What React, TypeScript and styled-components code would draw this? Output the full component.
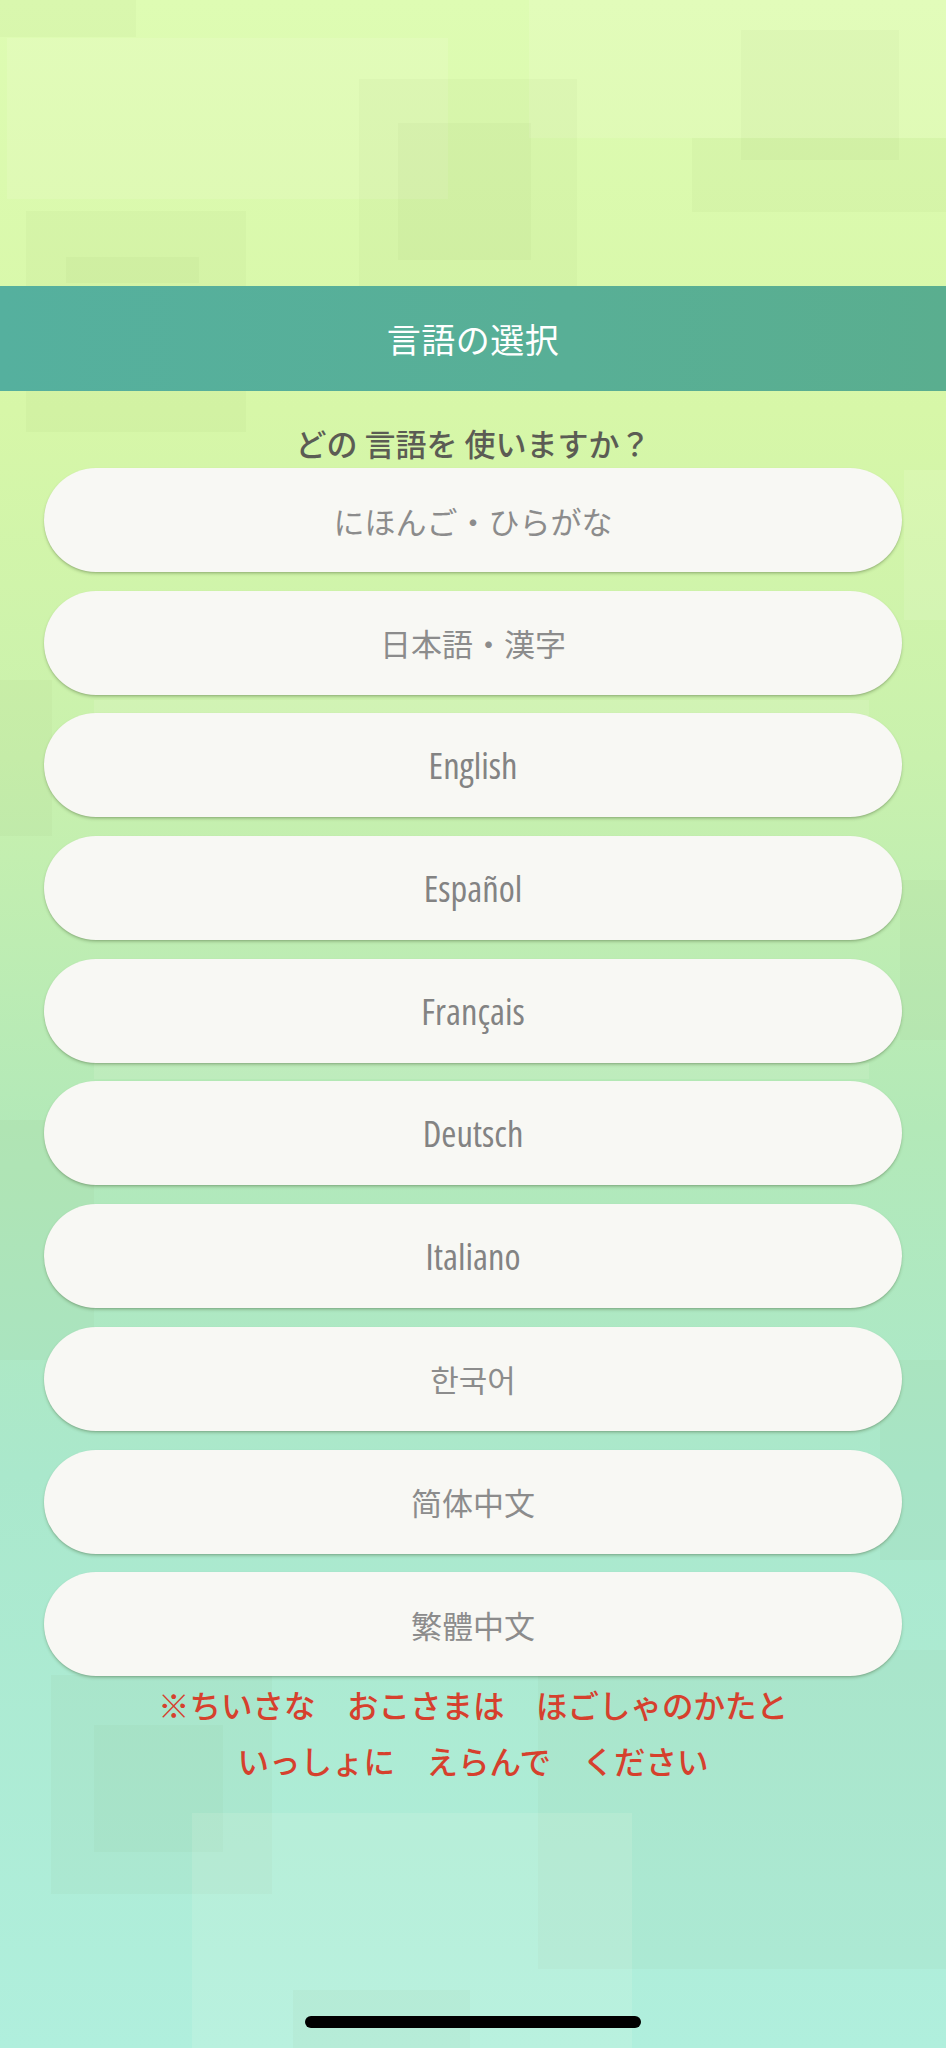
import React, { FC } from 'react';
import styled, { createGlobalStyle } from 'styled-components';

const GlobalStyle = createGlobalStyle`
  html, body {
    margin: 0;
    padding: 0;
  }

  body {
    font-family: "Noto Sans CJK JP", "Noto Sans", sans-serif;
  }
`;

const Screen = styled.div`
  position: relative;
  width: 946px;
  height: 2048px;
  overflow: hidden;
  display: flex;
  flex-direction: column;
  background: linear-gradient(
    180deg,
    #defcb3 0%,
    #d7f7a8 20%,
    #c9f1ad 37%,
    #b3e9b8 55%,
    #aae8cc 72%,
    #b0efdd 100%
  );
`;

// decorative mosaic behind everything
const Backdrop = styled.svg`
  position: absolute;
  inset: 0;
  z-index: 0;
`;

const Content = styled.div`
  position: relative;
  z-index: 1;
  display: flex;
  flex-direction: column;
  align-items: center;
  padding-top: 286px;
  flex: 1;
`;

const TitleBar = styled.header`
  align-self: stretch;
  height: 105px;
  display: flex;
  align-items: center;
  justify-content: center;
  background: linear-gradient(90deg, #55b09e 0%, #58af96 60%, #5aae8f 100%);
  color: #ffffff;
  font-size: 34px;
  letter-spacing: 0.5px;
`;

const Question = styled.p`
  margin: 36px 0 9px;
  line-height: 32px;
  font-size: 31px;
  font-weight: 500;
  color: #5b5c54;
`;

const OptionList = styled.ul`
  list-style: none;
  margin: 0;
  padding: 0;
  width: 858px;
  display: flex;
  flex-direction: column;
  gap: 18.7px;
`;

const OptionButton = styled.button<{ $latin?: boolean }>`
  width: 100%;
  height: 104px;
  border: none;
  border-radius: 52px;
  background: #f8f8f4;
  box-shadow: 0 2px 3px rgba(60, 90, 40, 0.28), 0 1px 1px rgba(0, 0, 0, 0.08);
  display: flex;
  align-items: center;
  justify-content: center;
  cursor: pointer;
  color: ${ props => props.$latin ? '#838383' : '#8c8c8c' };
  font-family: ${ props => props.$latin
    ? '"Open Sans", "Noto Sans", sans-serif'
    : '"Noto Sans CJK JP", "Noto Sans CJK SC", "Noto Sans CJK KR", sans-serif' };
  font-size: ${ props => props.$latin ? '36.5px' : '31px' };
  font-weight: ${ props => props.$latin ? 500 : 400 };
  font-stretch: ${ props => props.$latin ? '75%' : 'normal' };
`;

const Notice = styled.p`
  margin: 0;
  text-align: center;
  line-height: 56px;
  font-size: 31.5px;
  font-weight: 500;
  color: #d6402d;
  white-space: pre;
`;

const HomeIndicator = styled.div`
  position: absolute;
  left: 50%;
  bottom: 20px;
  width: 336px;
  height: 12px;
  margin-left: -168px;
  border-radius: 6px;
  background: #000000;
  z-index: 2;
`;

interface Tile {
  x: number;
  y: number;
  w: number;
  h: number;
  light?: boolean;
}

const tiles: Tile[] = [
  { x: 0, y: 0, w: 136, h: 37 },
  { x: 7, y: 38, w: 441, h: 161, light: true },
  { x: 529, y: 0, w: 417, h: 138, light: true },
  { x: 692, y: 138, w: 254, h: 74 },
  { x: 741, y: 30, w: 158, h: 130 },
  { x: 359, y: 79, w: 218, h: 208 },
  { x: 398, y: 123, w: 133, h: 137 },
  { x: 26, y: 211, w: 220, h: 221 },
  { x: 66, y: 257, w: 133, h: 26 },
  { x: 0, y: 680, w: 52, h: 156 },
  { x: 904, y: 470, w: 42, h: 150, light: true },
  { x: 94, y: 700, w: 775, h: 16, light: true },
  { x: 900, y: 880, w: 46, h: 160 },
  { x: 0, y: 1120, w: 94, h: 240 },
  { x: 94, y: 1063, w: 775, h: 16, light: true },
  { x: 880, y: 1360, w: 66, h: 200 },
  { x: 51, y: 1675, w: 221, h: 219 },
  { x: 94, y: 1725, w: 129, h: 127 },
  { x: 538, y: 1650, w: 408, h: 319 },
  { x: 192, y: 1813, w: 440, h: 235, light: true },
  { x: 293, y: 1990, w: 177, h: 58 },
];

const languages: { label: string; latin?: boolean }[] = [
  { label: 'にほんご・ひらがな' },
  { label: '日本語・漢字' },
  { label: 'English', latin: true },
  { label: 'Español', latin: true },
  { label: 'Français', latin: true },
  { label: 'Deutsch', latin: true },
  { label: 'Italiano', latin: true },
  { label: '한국어' },
  { label: '简体中文' },
  { label: '繁體中文' },
];

const LanguageSelect: FC = () => (
  <Screen>
    <Backdrop width="946" height="2048" viewBox="0 0 946 2048">
      { tiles.map((t, i) => (
        <rect
          key={ i }
          x={ t.x }
          y={ t.y }
          width={ t.w }
          height={ t.h }
          fill={ t.light ? 'rgba(255,255,235,0.12)' : 'rgba(110,150,60,0.045)' }
        />
      )) }
    </Backdrop>
    <Content>
      <TitleBar>言語の選択</TitleBar>
      <Question>どの 言語を 使いますか？</Question>
      <OptionList>
        { languages.map(x => (
          <li key={ x.label }>
            <OptionButton $latin={ x.latin }>{ x.label }</OptionButton>
          </li>
        )) }
      </OptionList>
      <Notice>{ '※ちいさな　おこさまは　ほごしゃのかたと\nいっしょに　えらんで　ください' }</Notice>
    </Content>
    <HomeIndicator />
  </Screen>
);

const App: FC = () => (
  <>
    <GlobalStyle />
    <LanguageSelect />
  </>
);

export default App;
